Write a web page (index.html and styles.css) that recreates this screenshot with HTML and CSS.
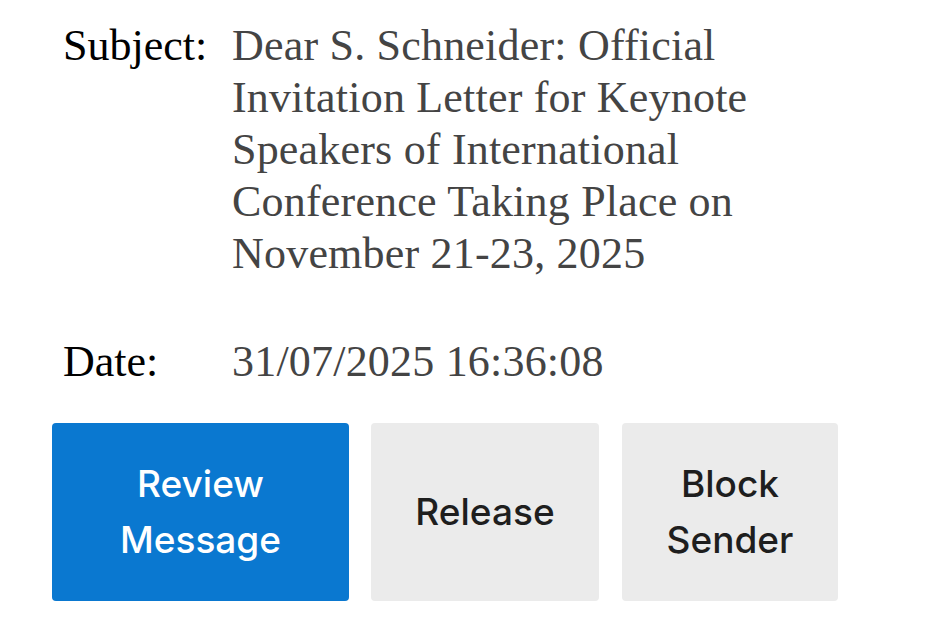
FILE: index.html
```html
<!DOCTYPE html>
<html>
<head>
<meta charset="utf-8">
<link rel="stylesheet" href="styles.css">
</head>
<body>
<div class="page">
  <div class="meta">
    <div class="row">
      <div class="label">Subject:</div>
      <div class="value">Dear S. Schneider: Official Invitation Letter for Keynote Speakers of International Conference Taking Place on November 21-23, 2025</div>
    </div>
    <div class="row">
      <div class="label">Date:</div>
      <div class="value">31/07/2025 16:36:08</div>
    </div>
  </div>
  <div class="actions">
    <a class="btn primary review">Review<br>Message</a>
    <a class="btn release">Release</a>
    <a class="btn block">Block<br>Sender</a>
  </div>
</div>
</body>
</html>
```

FILE: styles.css
```css
html, body {
  margin: 0;
  padding: 0;
  background: #ffffff;
}
.page {
  padding: 20px 0 0 52px;
}
.meta {
  display: flex;
  flex-direction: column;
  gap: 56px;
  padding-left: 11px;
}
.row {
  display: flex;
  font-family: "Liberation Serif", "Times New Roman", serif;
  font-size: 44px;
  line-height: 52px;
}
.label {
  width: 169px;
  flex: none;
  color: #000000;
}
.value {
  width: 600px;
  color: #444444;
  letter-spacing: 0.2px;
}
.actions {
  display: flex;
  gap: 22px;
  margin-top: 35px;
}
.btn {
  display: flex;
  align-items: center;
  justify-content: center;
  text-align: center;
  height: 178px;
  box-sizing: border-box;
  border-radius: 4px;
  font-family: "Inter", "Liberation Sans", sans-serif;
  font-size: 37px;
  font-weight: 500;
  line-height: 56px;
  background: #ebebeb;
  color: #1e1e1e;
}
.primary {
  background: #0a78d0;
  color: #ffffff;
}
.review { width: 297px; }
.release { width: 228px; }
.block { width: 216px; margin-left: 1px; }
```
